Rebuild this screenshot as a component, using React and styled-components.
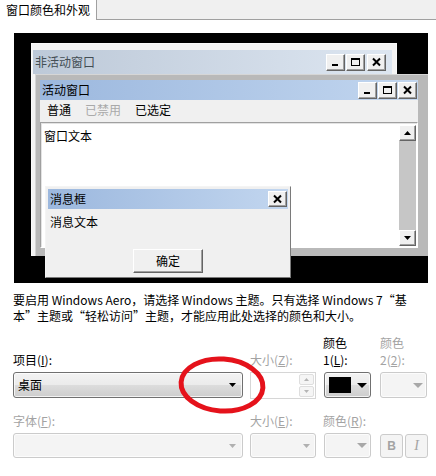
import React from "react";
import styled, { createGlobalStyle } from "styled-components";

const GlobalStyle = createGlobalStyle`
  *, *::before, *::after { box-sizing: border-box; }
  html, body { margin: 0; padding: 0; background: #fff; }
  body {
    font-family: "Noto Sans CJK SC", "Microsoft YaHei", sans-serif;
    font-size: 12px;
    color: #000;
  }
`;

const Page = styled.div`
  position: relative;
  width: 436px;
  height: 476px;
  overflow: hidden;
`;

/* ---------- tab strip ---------- */

const TabStrip = styled.div`
  display: flex;
  height: 20px;
`;

const Tab = styled.div`
  width: 97px;
  padding-left: 6px;
  border-right: 1px solid #a0a0a0;
  background: #fff;
  line-height: 20px;
  white-space: nowrap;
`;

const TabFiller = styled.div`
  flex: 1;
  background: #f0f0f0;
  border-bottom: 1px solid #a0a0a0;
`;

/* ---------- preview ---------- */

const Preview = styled.div`
  position: relative;
  width: 414px;
  height: 250px;
  margin: 13px 0 0 14px;
  background: #000;
  overflow: hidden;
`;

// windows sit on the preview like on a desktop
const InactiveWindow = styled.div`
  position: absolute;
  left: 17px;
  top: 10px;
  width: 366px;
  height: 213px;
  padding: 6px 4px 0 1px;
  background: #f4f4f4;
  border: 1px solid #fafafa;
`;

const ActiveWindow = styled.div`
  position: absolute;
  left: 21px;
  top: 41px;
  width: 393px;
  height: 182px;
  padding: 6px 10px 8px 5px;
  background: #b9b9b9;
  display: flex;
  flex-direction: column;
  box-shadow: inset 1px 1px #d6d6d6;
`;

const MessageBox = styled.div`
  position: absolute;
  left: 31px;
  top: 153px;
  width: 246px;
  height: 92px;
  padding: 2px 2px 0 2px;
  background: #f0f0f0;
  border: 1px solid;
  border-color: #f4f4f4 #7a7a7a #7a7a7a #f4f4f4;
  display: flex;
  flex-direction: column;
`;

const Caption = styled.div`
  display: flex;
  align-items: center;
  flex-shrink: 0;
  height: ${(p) => p.$h}px;
  padding: 0 ${(p) => p.$pr}px 0 2px;
  background: linear-gradient(to right, ${(p) => p.$from}, ${(p) => p.$to});
  color: ${(p) => p.$color || "#000"};
`;

const CaptionTitle = styled.span`
  flex: 1;
  line-height: 16px;
  white-space: nowrap;
`;

const CaptionButtons = styled.div`
  display: flex;
  gap: 1px;
`;

const CapButton = styled.div`
  width: 19px;
  height: ${(p) => p.$h || 17}px;
  margin-left: ${(p) => (p.$sep ? 1 : 0)}px;
  display: flex;
  align-items: center;
  justify-content: center;
  background: #f0f0f0;
  border: 1px solid;
  border-color: #fff #646464 #646464 #fff;
  box-shadow: inset -1px -1px #a0a0a0;
`;

const MinGlyph = () => (
  <svg width="11" height="10" viewBox="0 0 11 10">
    <rect x="2" y="7" width="6" height="2" fill="#000" />
  </svg>
);

const MaxGlyph = () => (
  <svg width="11" height="10" viewBox="0 0 11 10">
    <rect x="1.5" y="1.5" width="8" height="7" fill="none" stroke="#000" />
    <rect x="1" y="1" width="9" height="2" fill="#000" />
  </svg>
);

const CloseGlyph = () => (
  <svg width="11" height="10" viewBox="0 0 11 10">
    <path d="M2 1.5 L9 8.5 M9 1.5 L2 8.5" stroke="#000" strokeWidth="2" />
  </svg>
);

const MenuBar = styled.div`
  display: flex;
  flex-shrink: 0;
  height: 22px;
  padding-top: 2px;
  background: #f0f0f0;
`;

const MenuItem = styled.span`
  padding: 0 7px;
  line-height: 16px;
  color: ${(p) => (p.$disabled ? "#a9a9a9" : "#000")};
`;

const TextArea = styled.div`
  flex: 1;
  display: flex;
  background: #fff;
  border: 1px solid;
  border-color: #a0a0a0 #fff #fff #a0a0a0;
  box-shadow: inset 1px 1px #e3e3e3;
  padding: 2px 1px 1px 0;
`;

const WindowText = styled.div`
  flex: 1;
  padding: 3px 3px;
  line-height: 16px;
`;

const ScrollBar = styled.div`
  width: 17px;
  display: flex;
  flex-direction: column;
  background: #c6c6c6;
`;

const ScrollButton = styled.div`
  height: 16px;
  display: flex;
  align-items: center;
  justify-content: center;
  background: #f0f0f0;
  border: 1px solid;
  border-color: #fff #646464 #646464 #fff;
  box-shadow: inset -1px -1px #a0a0a0;
`;

const ScrollTrack = styled.div`
  flex: 1;
`;

const Tri = ({ w = 7, h = 4, up, color = "#000" }) => (
  <svg width={w} height={h} viewBox={`0 0 ${w} ${h}`}>
    <polygon
      points={up ? `0,${h} ${w},${h} ${w / 2},0` : `0,0 ${w},0 ${w / 2},${h}`}
      fill={color}
    />
  </svg>
);

const MessageText = styled.div`
  padding: 4px 0 0 2px;
  line-height: 17px;
`;

const MessageFooter = styled.div`
  flex: 1;
  display: flex;
  align-items: flex-end;
  justify-content: center;
  padding-bottom: 4px;
`;

const PushButton = styled.div`
  width: 70px;
  height: 24px;
  display: flex;
  align-items: center;
  justify-content: center;
  background: #f0f0f0;
  border: 1px solid;
  border-color: #fff #646464 #646464 #fff;
  box-shadow: inset -1px -1px #a0a0a0;
  line-height: 16px;
`;

/* ---------- description ---------- */

const Description = styled.p`
  margin: 9px 0 0 13px;
  line-height: 16px;
  white-space: nowrap;
`;

/* ---------- form ---------- */

const Form = styled.div`
  display: grid;
  grid-template-columns: 237px 73px 57px 1fr;
  grid-template-rows: 34px 27px 26px 26px;
  row-gap: 4px;
  margin: 10px 0 0 13px;
`;

const Label = styled.div`
  align-self: end;
  line-height: 17px;
  white-space: nowrap;
  color: ${(p) => (p.$disabled ? "#a3a3a3" : "#000")};
`;

const Combo = styled.div`
  display: flex;
  align-items: center;
  justify-content: space-between;
  width: ${(p) => p.$w}px;
  height: ${(p) => p.$h}px;
  margin-left: ${(p) => p.$ml || 0}px;
  padding: 0 ${(p) => p.$pr || 6}px 0 4px;
  border: 1px solid ${(p) => (p.$disabled ? "#cbcbcb" : "#707070")};
  border-radius: 3px;
  background: ${(p) =>
    p.$disabled
      ? "#f4f4f4"
      : "linear-gradient(#f3f3f3 0%, #ebebeb 48%, #dcdcdc 52%, #cdcdcd 100%)"};
  box-shadow: inset 0 0 0 1px rgba(255, 255, 255, 0.75);
  line-height: 16px;
`;

const Spin = styled.div`
  display: flex;
  justify-content: flex-end;
  width: 66px;
  height: 27px;
  padding: 1px;
  background: #fff;
  border: 1px solid #d6d6d6;
`;

const SpinButtons = styled.div`
  width: 15px;
  display: flex;
  flex-direction: column;
  gap: 1px;
`;

const SpinButton = styled.div`
  flex: 1;
  display: flex;
  align-items: center;
  justify-content: center;
  background: #f5f5f5;
  border: 1px solid #dedede;
  border-radius: 2px;
`;

const Swatch = styled.div`
  width: 22px;
  height: 16px;
  background: #000;
`;

const StyleButtons = styled.div`
  display: flex;
  gap: 2px;
  margin-top: 1px;
`;

const StyleButton = styled.div`
  width: 23px;
  height: 24px;
  display: flex;
  align-items: center;
  justify-content: center;
  background: #f4f4f4;
  border: 1px solid #cbcbcb;
  border-radius: 3px;
  color: #a3a3a3;
  font-family: ${(p) =>
    p.$italic ? '"Liberation Serif", serif' : '"Liberation Sans", sans-serif'};
  font-weight: ${(p) => (p.$italic ? "normal" : "bold")};
  font-style: ${(p) => (p.$italic ? "italic" : "normal")};
  font-size: ${(p) => (p.$italic ? 14 : 12)}px;
`;

const Annotation = styled.svg`
  position: absolute;
  left: 176px;
  top: 355px;
`;

export default function App() {
  return (
    <Page>
      <GlobalStyle />
      <TabStrip>
        <Tab>窗口颜色和外观</Tab>
        <TabFiller />
      </TabStrip>

      <Preview>
        <InactiveWindow>
          <Caption $h={24} $pr={6} $from="#bdc9d8" $to="#dde6f1" $color="#434e54">
            <CaptionTitle>非活动窗口</CaptionTitle>
            <CaptionButtons>
              <CapButton><MinGlyph /></CapButton>
              <CapButton><MaxGlyph /></CapButton>
              <CapButton $sep><CloseGlyph /></CapButton>
            </CaptionButtons>
          </Caption>
        </InactiveWindow>

        <ActiveWindow>
          <Caption $h={20} $pr={1} $from="#9cb8de" $to="#c2d6ef">
            <CaptionTitle>活动窗口</CaptionTitle>
            <CaptionButtons>
              <CapButton><MinGlyph /></CapButton>
              <CapButton><MaxGlyph /></CapButton>
              <CapButton><CloseGlyph /></CapButton>
            </CaptionButtons>
          </Caption>
          <MenuBar>
            <MenuItem>普通</MenuItem>
            <MenuItem $disabled>已禁用</MenuItem>
            <MenuItem>已选定</MenuItem>
          </MenuBar>
          <TextArea>
            <WindowText>窗口文本</WindowText>
            <ScrollBar>
              <ScrollButton><Tri up /></ScrollButton>
              <ScrollTrack />
              <ScrollButton><Tri /></ScrollButton>
            </ScrollBar>
          </TextArea>
        </ActiveWindow>

        <MessageBox>
          <Caption $h={20} $pr={1} $from="#9cb8de" $to="#c2d6ef">
            <CaptionTitle>消息框</CaptionTitle>
            <CapButton $h={16}><CloseGlyph /></CapButton>
          </Caption>
          <MessageText>消息文本</MessageText>
          <MessageFooter>
            <PushButton>确定</PushButton>
          </MessageFooter>
        </MessageBox>
      </Preview>

      <Description>
        要启用 Windows Aero，请选择 Windows 主题。只有选择 Windows 7“基
        <br />
        本”主题或“轻松访问”主题，才能应用此处选择的颜色和大小。
      </Description>

      <Form>
        <Label>项目(<u>I</u>):</Label>
        <Label $disabled>大小(<u>Z</u>):</Label>
        <Label>颜色<br />1(<u>L</u>):</Label>
        <Label $disabled>颜色<br />2(<u>2</u>):</Label>

        <Combo $w={230} $h={26}>
          <span>桌面</span>
          <Tri />
        </Combo>
        <Spin>
          <SpinButtons>
            <SpinButton><Tri w={5} h={3} up color="#b5b5b5" /></SpinButton>
            <SpinButton><Tri w={5} h={3} color="#b5b5b5" /></SpinButton>
          </SpinButtons>
        </Spin>
        <Combo $w={47} $h={26} $ml={1} $pr={3}>
          <Swatch />
          <Tri w={10} h={5} />
        </Combo>
        <Combo $w={47} $h={26} $pr={3} $disabled style={{ justifyContent: "flex-end" }}>
          <Tri w={10} h={5} color="#a8a8a8" />
        </Combo>

        <Label $disabled>字体(<u>F</u>):</Label>
        <Label $disabled>大小(<u>E</u>):</Label>
        <Label $disabled>颜色(<u>R</u>):</Label>
        <span />

        <Combo $w={230} $h={25} $disabled style={{ justifyContent: "flex-end" }}>
          <Tri color="#b0b0b0" />
        </Combo>
        <Combo $w={66} $h={25} $disabled $pr={5} style={{ justifyContent: "flex-end" }}>
          <Tri color="#b0b0b0" />
        </Combo>
        <Combo $w={47} $h={25} $ml={1} $pr={3} $disabled style={{ justifyContent: "flex-end" }}>
          <Tri w={10} h={5} color="#a8a8a8" />
        </Combo>
        <StyleButtons>
          <StyleButton>B</StyleButton>
          <StyleButton $italic>I</StyleButton>
        </StyleButtons>
      </Form>

      <Annotation width="92" height="60" viewBox="0 0 92 60">
        <ellipse
          cx="46"
          cy="30"
          rx="41"
          ry="26"
          fill="none"
          stroke="#e5121b"
          strokeWidth="5"
          transform="rotate(4 46 30)"
        />
      </Annotation>
    </Page>
  );
}
